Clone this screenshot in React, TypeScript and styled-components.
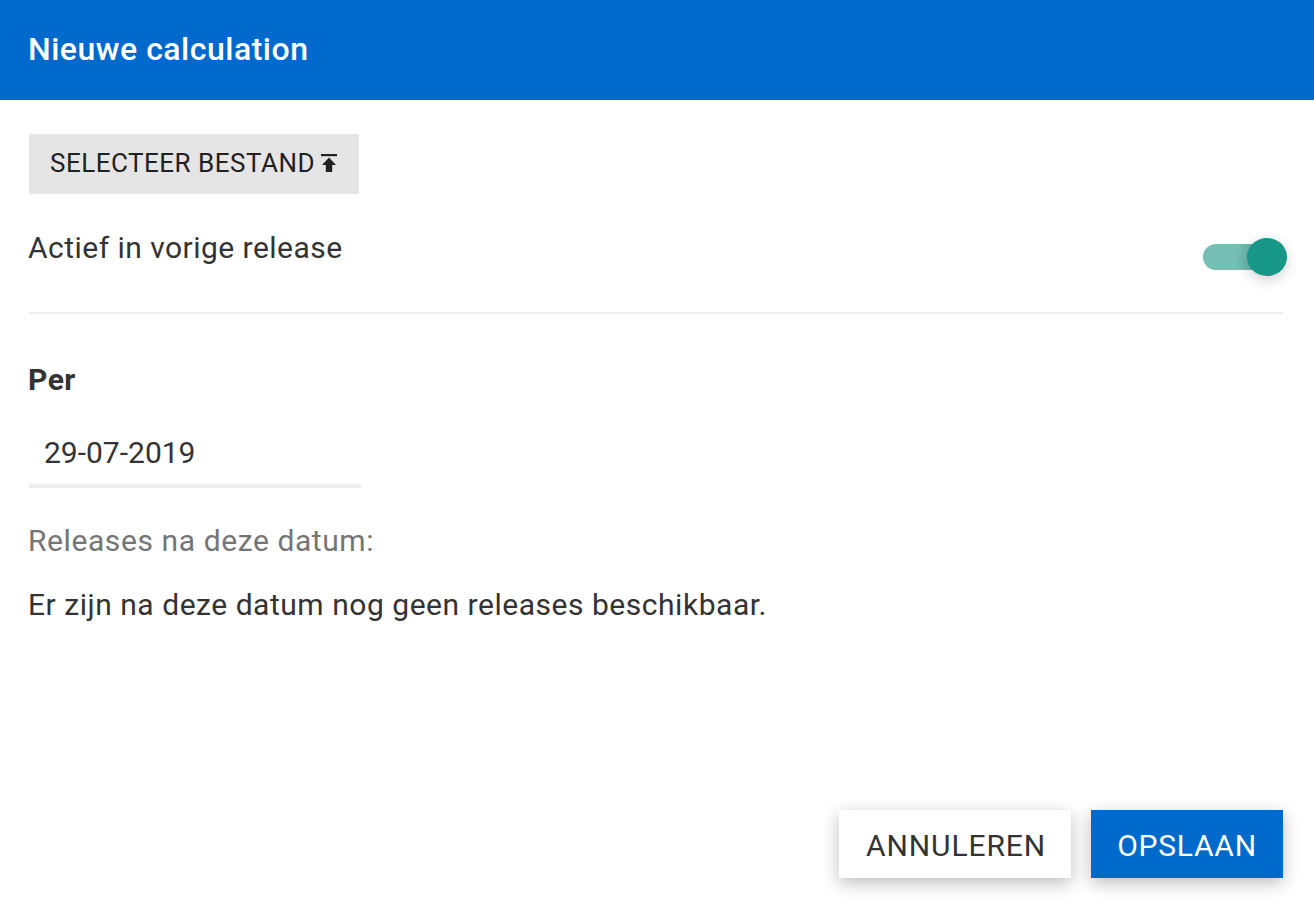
import styled, { createGlobalStyle } from 'styled-components';

const GlobalStyle = createGlobalStyle`
  html, body {
    margin: 0;
    padding: 0;
    background: #fff;
  }
  body {
    font-family: Roboto, 'Noto Sans', sans-serif;
    color: #333;
  }
`;

const Dialog = styled.div`
  width: 1314px;
  height: 909px;
  display: flex;
  flex-direction: column;
  overflow: hidden;
`;

const Header = styled.header`
  height: 97px;
  flex: none;
  display: flex;
  align-items: center;
  padding: 0 29px 3px 28px;
  background: #0069cc;
  color: #fff;
  font-size: 32px;
  font-weight: 500;
  letter-spacing: 0.5px;
`;

const Body = styled.main`
  flex: 1;
  padding: 34px 31px 0 29px;
`;

const UploadButton = styled.button`
  width: 330px;
  height: 60px;
  box-sizing: border-box;
  display: flex;
  align-items: center;
  justify-content: flex-start;
  gap: 6px;
  padding: 0 0 2px 21px;
  border: 0;
  background: #e5e5e5;
  color: #212121;
  font: 400 26px Roboto, sans-serif;
  letter-spacing: 0.5px;
`;

const ToggleRow = styled.div`
  height: 120px;
  display: flex;
  justify-content: space-between;
  padding-top: 36px;
  box-sizing: border-box;
  border-bottom: 2px solid #eee;
`;

const Label = styled.span`
  font-size: 30px;
  line-height: 36px;
  letter-spacing: 0.47px;
  margin-left: -1px;
`;

const Toggle = styled.div`
  position: relative;
  width: 64px;
  height: 26px;
  margin-top: 14px;
  margin-right: 16px;
  border-radius: 13px;
  background: linear-gradient(90deg, #75bfb5 50%, #5fa99f 100%);
`;

const Thumb = styled.div`
  position: absolute;
  top: -6px;
  right: -20px;
  width: 40px;
  height: 38px;
  border-radius: 50%;
  background: #179787;
  box-shadow: 0 4px 14px rgba(0, 0, 0, 0.18);
`;

const FieldLabel = styled.div`
  margin: 48px 0 0 -1px;
  font-size: 30px;
  line-height: 36px;
  font-weight: 700;
  letter-spacing: 0.5px;
`;

const DateInput = styled.div`
  width: 332px;
  height: 63px;
  margin-top: 27px;
  box-sizing: border-box;
  padding: 10px 15px 0;
  border-bottom: 4px solid #eee;
  font-size: 30px;
  line-height: 36px;
`;

const Hint = styled.div`
  margin: 35px 0 0 -1px;
  color: #757575;
  font-size: 30px;
  line-height: 36px;
  letter-spacing: 0.59px;
`;

const Message = styled.p`
  margin: 28px 0 0 -1px;
  font-size: 30px;
  line-height: 36px;
  letter-spacing: 0.53px;
`;

const Footer = styled.footer`
  flex: none;
  display: flex;
  justify-content: flex-end;
  gap: 20px;
  padding: 0 31px 31px 0;
`;

const ActionButton = styled.button<{ $primary?: boolean }>`
  height: 68px;
  width: ${(p) => (p.$primary ? '192px' : '232px')};
  box-sizing: border-box;
  padding: 2px 0 0 ${(p) => (p.$primary ? '0' : '2px')};
  border: 0;
  background: ${(p) => (p.$primary ? '#0069cc' : '#fff')};
  color: ${(p) => (p.$primary ? '#fff' : '#333')};
  font: 400 30px Roboto, sans-serif;
  letter-spacing: ${(p) => (p.$primary ? '0.75px' : '0.9px')};
  box-shadow: 0 5px 16px rgba(0, 0, 0, 0.26);
`;

function UploadIcon() {
  return (
    <svg width="16" height="18" viewBox="0 0 16 18" aria-hidden="true">
      <path d="M0 0h16v2.2H0z" fill="#212121" />
      <path d="M8 3.6L15 11h-3.8v7H4.8v-7H1z" fill="#212121" />
    </svg>
  );
}

export default function App() {
  return (
    <>
      <GlobalStyle />
      <Dialog>
        <Header>Nieuwe calculation</Header>
        <Body>
          <UploadButton>
            SELECTEER BESTAND
            <UploadIcon />
          </UploadButton>
          <ToggleRow>
            <Label>Actief in vorige release</Label>
            <Toggle>
              <Thumb />
            </Toggle>
          </ToggleRow>
          <FieldLabel>Per</FieldLabel>
          <DateInput>29-07-2019</DateInput>
          <Hint>Releases na deze datum:</Hint>
          <Message>Er zijn na deze datum nog geen releases beschikbaar.</Message>
        </Body>
        <Footer>
          <ActionButton>ANNULEREN</ActionButton>
          <ActionButton $primary>OPSLAAN</ActionButton>
        </Footer>
      </Dialog>
    </>
  );
}
